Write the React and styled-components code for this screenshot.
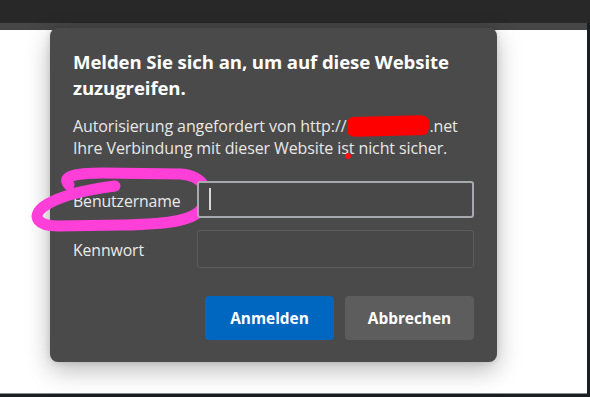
import React from "react";
import styled, { createGlobalStyle } from "styled-components";

const Global = createGlobalStyle`
  html, body { margin: 0; padding: 0; background: #1c1f22; }
  body { font-family: "Open Sans", "Noto Sans", sans-serif; }
  * { box-sizing: border-box; }
`;

const Frame = styled.div`
  width: 590px;
  height: 397px;
  display: flex;
  flex-direction: column;
  background: #1c1f22;
  overflow: hidden;
`;

const TopBar = styled.div`
  height: 23px;
  background: #282828;
  flex: none;
`;

const Strip = styled.div`
  height: 7px;
  margin-right: 3px;
  background: #464646;
  flex: none;
`;

const Page = styled.div`
  flex: 1;
  margin-right: 3px;
  background: #ffffff;
  padding-left: 50px;
  border-bottom: 1px solid #8a8d90;
`;

const BottomEdge = styled.div`
  height: 3px;
  flex: none;
  background: #1c1f22;
`;

const Dialog = styled.div`
  position: relative;
  width: 447px;
  height: 334px;
  margin-top: -2px;
  background: #4a4a4a;
  border-radius: 8px;
  box-shadow: 0 8px 24px rgba(0, 0, 0, 0.28), 0 0 6px rgba(0, 0, 0, 0.12);
  padding: 21px 23px 22px 23px;
  display: flex;
  flex-direction: column;
  color: #ffffff;
`;

const Title = styled.h1`
  margin: 0;
  font-size: 18.6px;
  line-height: 26px;
  font-weight: 700;
  letter-spacing: -0.1px;
  color: #ffffff;
`;

const Body = styled.p`
  margin: 14px 0 0 0;
  font-size: 16px;
  line-height: 22px;
  font-weight: 400;
  letter-spacing: -0.1px;
  color: #e8e8e8;
`;

const Redact = styled.span`
  display: inline-block;
  vertical-align: -4px;
  width: 82px;
  height: 20px;
  margin-left: 1px;
  background: #ff0000;
  border-radius: 6px 9px 5px 10px / 8px 6px 9px 5px;
  transform: rotate(-1.5deg);
`;

const Marked = styled.span`
  position: relative;
`;

const Dot = styled.span`
  position: absolute;
  left: 4px;
  top: 16px;
  width: 6px;
  height: 6px;
  border-radius: 50%;
  background: #ff1010;
`;

const Form = styled.div`
  margin-top: 22px;
  display: grid;
  grid-template-columns: 124px 1fr;
  row-gap: 12px;
  align-items: center;
`;

const Label = styled.label`
  position: relative;
  top: 1px;
  font-size: 15.8px;
  letter-spacing: -0.1px;
  color: #eaeaea;
`;

const Input = styled.div`
  position: relative;
  height: ${(p) => (p.$focused ? "37px" : "38px")};
  border-radius: 3px;
  background: #484848;
  border: ${(p) => (p.$focused ? "2px solid #a6aaae" : "1px solid #5c5c5c")};
`;

const Caret = styled.span`
  position: absolute;
  left: 10px;
  top: 5px;
  width: 1.5px;
  height: 22px;
  background: #d8d8d8;
`;

const Actions = styled.div`
  margin-top: auto;
  display: flex;
  justify-content: flex-end;
  gap: 11px;
`;

const Button = styled.button`
  width: 129px;
  height: 44px;
  border: none;
  border-radius: 4px;
  font-family: inherit;
  font-size: 15.4px;
  font-weight: 700;
  color: #ffffff;
  background: ${(p) => (p.$primary ? "#0067c0" : "#5d5d5d")};
`;

const Scribble = styled.svg`
  position: absolute;
  left: -40px;
  top: -19px;
  overflow: visible;
  pointer-events: none;
`;

export default function App() {
  return (
    <>
      <Global />
      <Frame>
        <TopBar />
        <Strip />
        <Page>
          <Dialog>
            <Title>
              Melden Sie sich an, um auf diese Website
              <br />
              zuzugreifen.
            </Title>
            <Body>
              Autorisierung angefordert von http://<Redact />.net
              <br />
              Ihre Verbindung mit dieser Website i<Marked>s<Dot /></Marked>t nicht sicher.
            </Body>
            <Form>
              <Label>
                Benutzername
                <Scribble width="180" height="58" viewBox="0 0 180 58">
                  <path
                    d="M 36 14 C 28 6, 40 2, 70 2 L 148 3 C 170 5, 179 20, 170 36 C 162 49, 140 53, 90 54 L 25 55 C 5 55, -2 46, 10 36 C 25 25, 50 19, 82 15"
                    fill="none"
                    stroke="#ff3fd8"
                    strokeWidth="11"
                    strokeLinecap="round"
                    strokeLinejoin="round"
                  />
                </Scribble>
              </Label>
              <Input $focused>
                <Caret />
              </Input>
              <Label>Kennwort</Label>
              <Input />
            </Form>
            <Actions>
              <Button $primary>Anmelden</Button>
              <Button>Abbrechen</Button>
            </Actions>
          </Dialog>
        </Page>
        <BottomEdge />
      </Frame>
    </>
  );
}
